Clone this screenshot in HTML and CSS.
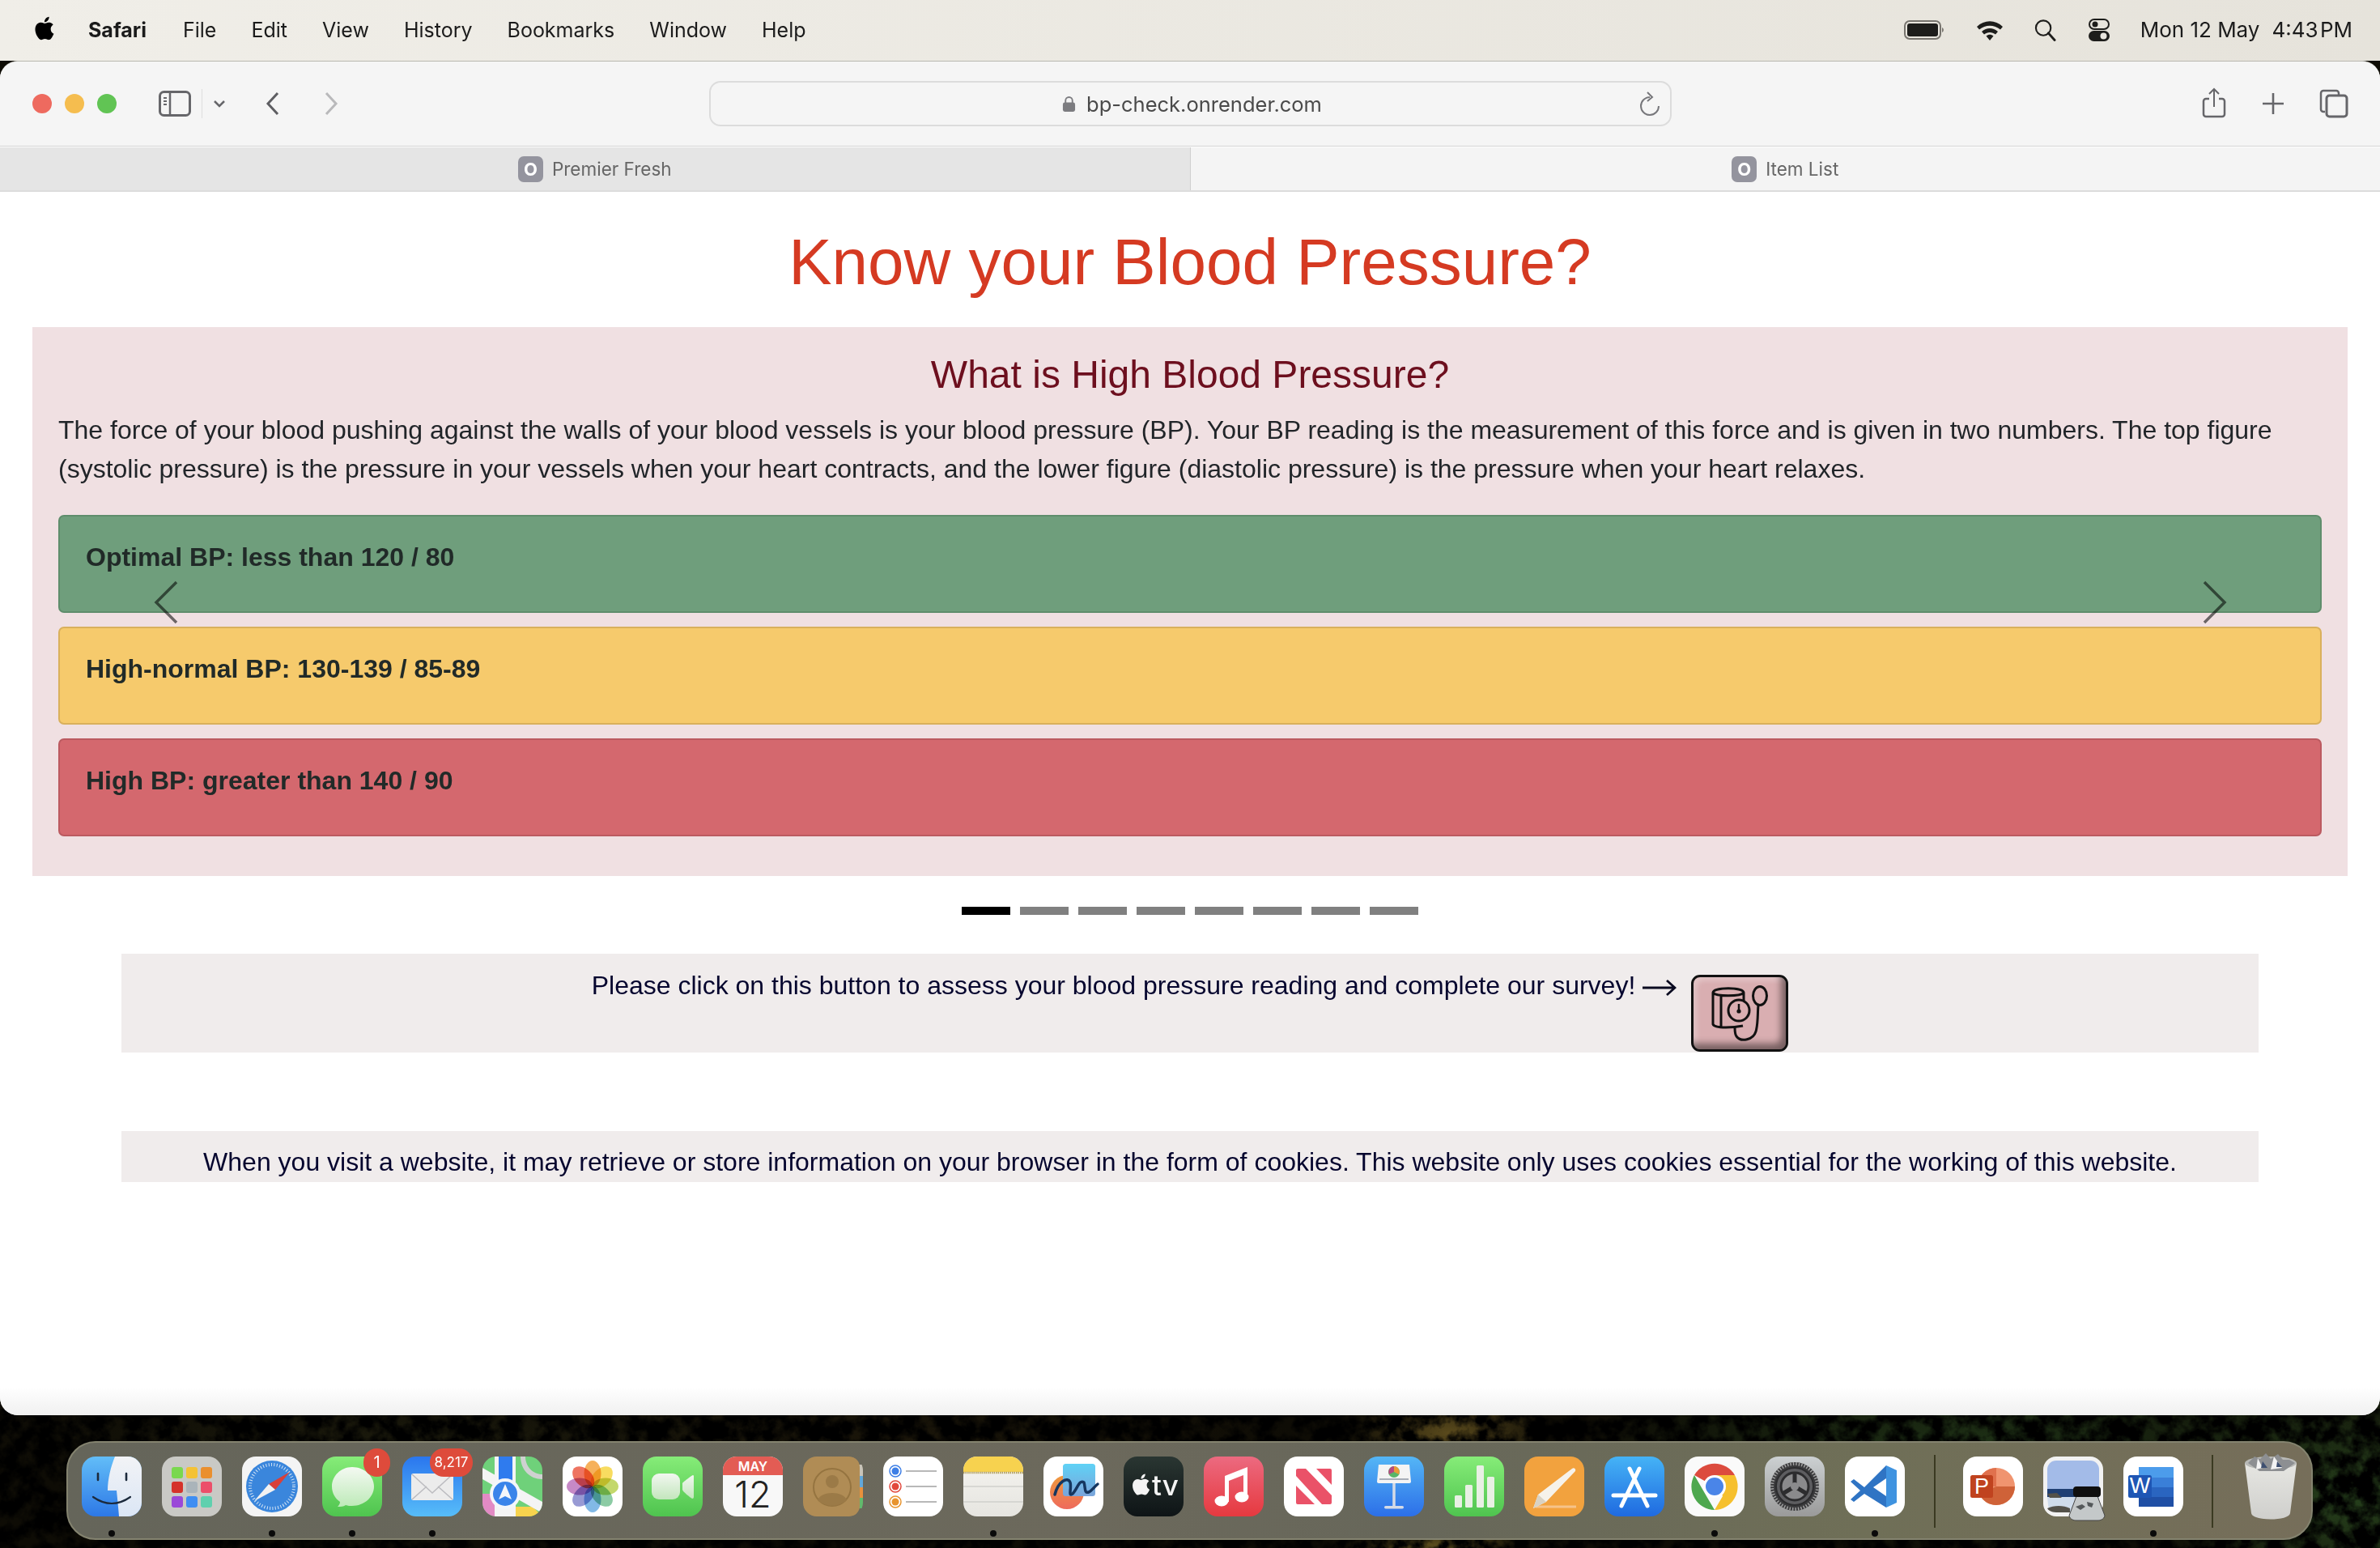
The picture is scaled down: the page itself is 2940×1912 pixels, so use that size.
FILE: index.html
```html
<!DOCTYPE html>
<html lang="en">

<head>
    <meta charset="UTF-8">
    <title>Know your Blood Pressure?</title>
    <link rel="stylesheet" href="styles.css">
</head>

<body>
    <!-- Desktop picture, only the strip under the window shows -->
    <svg class="wallpaper" width="2940" height="1912">
        <filter id="leaves" x="0" y="0" width="100%" height="100%">
            <feTurbulence type="fractalNoise" baseFrequency="0.045" numOctaves="4" seed="7"/>
            <feColorMatrix values="0 0 0 0 0  0 0 0 0 0  0 0 0 0 0  3.4 0 0 0 -1"/>
        </filter>
        <rect y="1740" width="2940" height="172" filter="url(#leaves)"/>
    </svg>

    <!-- Menu bar -->
    <header class="menubar">
        <svg class="apple" viewBox="0 0 24 24"><path d="M18.71 19.5c-.83 1.24-1.71 2.45-3.05 2.47-1.34.03-1.77-.79-3.29-.79-1.53 0-2 .77-3.27.82-1.31.05-2.3-1.32-3.14-2.53C4.25 17 2.94 12.45 4.7 9.39c.87-1.52 2.43-2.48 4.12-2.51 1.28-.02 2.5.87 3.29.87.78 0 2.26-1.07 3.81-.91.65.03 2.47.26 3.64 1.98-.09.06-2.17 1.28-2.15 3.81.03 3.02 2.65 4.03 2.68 4.04-.03.07-.42 1.44-1.38 2.83M13 3.5c.73-.83 1.94-1.46 2.94-1.5.13 1.17-.34 2.35-1.04 3.19-.69.85-1.83 1.51-2.95 1.42-.15-1.15.41-2.35 1.05-3.11z"/></svg>
        <nav class="menu">
            <b>Safari</b>
            <span>File</span>
            <span>Edit</span>
            <span>View</span>
            <span>History</span>
            <span>Bookmarks</span>
            <span>Window</span>
            <span>Help</span>
        </nav>
        <div class="status">
            <svg class="st-battery" viewBox="0 0 50 24"><rect x="1" y="1" width="44" height="22" rx="6" fill="none" stroke="#77746e" stroke-width="2"/><rect x="4" y="4" width="38" height="16" rx="3" fill="#1d1d1b"/><path d="M47 9c2.500 1 2.500 5 0 6z" fill="#77746e"/></svg>
            <svg class="st-wifi" viewBox="0 0 34 26"><path d="M1 9C10 0 24 0 33 9l-3 3.500C22.500 6 11.500 6 4 12.500z" fill="#1d1d1b"/><path d="M7 15c6-5.500 14-5.500 20 0l-3 3.500c-4-3.500-10-3.500-14 0z" fill="#1d1d1b"/><path d="M12.500 20.500c3-2.500 6-2.500 9 0L17 26z" fill="#1d1d1b"/></svg>
            <svg class="st-search" viewBox="0 0 28 28"><circle cx="11.500" cy="11.500" r="9.500" fill="none" stroke="#1d1d1b" stroke-width="2.200"/><path d="M18 18l8 9" stroke="#1d1d1b" stroke-width="3" stroke-linecap="round"/></svg>
            <svg class="st-control" viewBox="0 0 26 28"><rect x="1" y="1" width="24" height="12" rx="6" fill="none" stroke="#1d1d1b" stroke-width="2"/><circle cx="8" cy="7" r="3.500" fill="#1d1d1b"/><rect x="0" y="15" width="26" height="13" rx="6.500" fill="#1d1d1b"/><circle cx="18.500" cy="21.500" r="4" fill="#e8e5de"/></svg>
            <span class="clock">Mon 12 May</span>
            <span class="clock clock-time">4:43 PM</span>
        </div>
    </header>

    <!-- Browser window -->
    <div class="window">
        <div class="toolbar">
            <div class="tb-left">
                <i class="light light-red"></i>
                <i class="light light-yellow"></i>
                <i class="light light-green"></i>
                <svg class="tb-sidebar" viewBox="0 0 40 32"><rect x="1.500" y="1.500" width="37" height="29" rx="5" fill="none" stroke="#66666a" stroke-width="3"/><path d="M14 2v28" stroke="#66666a" stroke-width="2.500"/><path d="M6 9h4M6 13h4M6 17h4" stroke="#66666a" stroke-width="2"/></svg>
                <i class="tb-sep"></i>
                <svg class="tb-chevron" viewBox="0 0 18 12"><path d="M3 3l6 6 6-6" fill="none" stroke="#66666a" stroke-width="2.500"/></svg>
                <svg class="tb-back" viewBox="0 0 18 30"><path d="M15 2L3 15l12 13" fill="none" stroke="#5e5e62" stroke-width="3"/></svg>
                <svg class="tb-forward" viewBox="0 0 18 30"><path d="M3 2l12 13L3 28" fill="none" stroke="#b9b9bb" stroke-width="3"/></svg>
            </div>
            <div class="urlbar">
                <svg class="lock" viewBox="0 0 18 22"><path d="M4.500 10V6.500a4.500 4.500 0 0 1 9 0V10" fill="none" stroke="#7c7c80" stroke-width="2"/><rect x="1" y="9" width="16" height="12" rx="2.500" fill="#7c7c80"/></svg>
                <span class="url">bp-check.onrender.com</span>
                <svg class="reload" viewBox="0 0 26 30"><path d="M24 18A11 11 0 1 1 13 7" fill="none" stroke="#77777b" stroke-width="2"/><path d="M10 1l6 6-6 5" fill="none" stroke="#77777b" stroke-width="2"/></svg>
            </div>
            <div class="tb-right">
                <svg class="tb-share" viewBox="0 0 30 38"><path d="M9 14H5a3 3 0 0 0-3 3v16a3 3 0 0 0 3 3h20a3 3 0 0 0 3-3V17a3 3 0 0 0-3-3h-4" fill="none" stroke="#66666a" stroke-width="2.500"/><path d="M15 24V2M9 8l6-6 6 6" fill="none" stroke="#66666a" stroke-width="2"/></svg>
                <svg class="tb-plus" viewBox="0 0 28 28"><path d="M14 1v26M1 14h26" stroke="#66666a" stroke-width="2.600"/></svg>
                <svg class="tb-tabs" viewBox="0 0 36 36"><path d="M7 28H5a3 3 0 0 1-3-3V5a3 3 0 0 1 3-3h16a3 3 0 0 1 3 3v2" fill="none" stroke="#66666a" stroke-width="2.500"/><rect x="9" y="8" width="25" height="26" rx="3.500" fill="none" stroke="#66666a" stroke-width="3"/></svg>
            </div>
        </div>
        <div class="tabs">
            <div class="tab tab-off"><i class="favicon">O</i><span>Premier Fresh</span></div>
            <div class="tab tab-on"><i class="favicon">O</i><span>Item List</span></div>
        </div>

        <!-- Page content -->
        <main class="page">
            <h1>Know your Blood Pressure?</h1>

            <section class="slide">
                <h2>What is High Blood Pressure?</h2>
                <p>The force of your blood pushing against the walls of your blood vessels is your blood pressure (BP). Your BP reading is the measurement of this force and is given in two numbers. The top figure (systolic pressure) is the pressure in your vessels when your heart contracts, and the lower figure (diastolic pressure) is the pressure when your heart relaxes.</p>
                <div class="alert alert-green">Optimal BP: less than 120 / 80</div>
                <div class="alert alert-yellow">High-normal BP: 130-139 / 85-89</div>
                <div class="alert alert-red">High BP: greater than 140 / 90</div>
                <svg class="arrow arrow-prev" viewBox="0 0 30 54"><path d="M28 2L3 27l25 25" fill="none" stroke="#000" stroke-width="3.500"/></svg>
                <svg class="arrow arrow-next" viewBox="0 0 30 54"><path d="M2 2l25 25L2 52" fill="none" stroke="#000" stroke-width="3.500"/></svg>
            </section>

            <div class="dots">
                <i class="dot dot-on"></i><i class="dot"></i><i class="dot"></i><i class="dot"></i><i class="dot"></i><i class="dot"></i><i class="dot"></i><i class="dot"></i>
            </div>

            <div class="notice notice-survey">
                <span>Please click on this button to assess your blood pressure reading and complete our survey!</span>
                <svg class="notice-arrow" viewBox="0 0 42 22"><path d="M0 11h40M30 2l10 9-10 9" fill="none" stroke="#0a0a20" stroke-width="2.800"/></svg>
                <button class="bp-button">
                    <svg viewBox="0 0 70 70"><path d="M18 52c-7 0-15-1-16-4V9c1-7 37-7 38 0v13M2 9c4 5 34 5 38 0M12 11v40M18 52c6 0 16-1 21-2" fill="none" stroke="#111" stroke-width="3"/><circle cx="34" cy="31" r="13" fill="#d9aeb1" stroke="#111" stroke-width="3"/><path d="M34 23v9" stroke="#111" stroke-width="2.500"/><circle cx="34" cy="32" r="2.600" fill="#111"/><ellipse cx="60" cy="13" rx="8.500" ry="11.500" fill="none" stroke="#111" stroke-width="3"/><path d="M58 25c-1 8 0 22-3 32-3 10-18 14-24 6-2-3-2-6-2-11" fill="none" stroke="#111" stroke-width="3"/></svg>
                </button>
            </div>

            <div class="notice notice-cookies">When you visit a website, it may retrieve or store information on your browser in the form of cookies. This website only uses cookies essential for the working of this website.</div>
        </main>
    </div>

    <!-- Dock -->
    <footer class="dock">
        <!-- Finder -->
        <div class="app run"><svg viewBox="0 0 74 74"><defs><linearGradient id="gfb" x2="0" y2="1"><stop offset="0" stop-color="#62bdf8"/><stop offset="1" stop-color="#2d78e6"/></linearGradient><linearGradient id="gfw" x2="0" y2="1"><stop offset="0" stop-color="#f2f3f6"/><stop offset="1" stop-color="#dbe6f5"/></linearGradient></defs><rect width="74" height="74" fill="url(#gfb)"/><path d="M41 0h33v74H46c-1-12-2-22-3-32H32c0-14 4-30 9-42z" fill="url(#gfw)"/><path d="M20 21v8M55 21v8" stroke="#1c2a3c" stroke-width="2.600" stroke-linecap="round"/><path d="M14 50q23 16 46 0" fill="none" stroke="#1c2a3c" stroke-width="2.200" stroke-linecap="round"/></svg></div>
        <!-- Launchpad -->
        <div class="app"><svg viewBox="0 0 74 74"><rect width="74" height="74" fill="#c9c9c5"/><rect x="12" y="13" width="14" height="14" rx="3" fill="#7ad84f"/><rect x="30" y="13" width="14" height="14" rx="3" fill="#f4c235"/><rect x="48" y="13" width="14" height="14" rx="3" fill="#ea8f2e"/><rect x="12" y="31" width="14" height="14" rx="3" fill="#d5322a"/><rect x="30" y="31" width="14" height="14" rx="3" fill="#aab4ba"/><rect x="48" y="31" width="14" height="14" rx="3" fill="#ec4f6a"/><rect x="12" y="49" width="14" height="14" rx="3" fill="#9a49d8"/><rect x="30" y="49" width="14" height="14" rx="3" fill="#3f8ef2"/><rect x="48" y="49" width="14" height="14" rx="3" fill="#5fd0ae"/></svg></div>
        <!-- Safari -->
        <div class="app run"><svg viewBox="0 0 74 74"><rect width="74" height="74" fill="#f4f4f4"/><circle cx="37" cy="37" r="32" fill="#3a86dc"/><circle cx="37" cy="37" r="27" fill="none" stroke="#d6e6f6" stroke-width="4" stroke-dasharray="1 2.400"/><path d="M59 19L33 34l8 7z" fill="#d9403a"/><path d="M15 55l26-14-8-7z" fill="#f2f2f2"/></svg></div>
        <!-- Messages -->
        <div class="app run"><svg viewBox="0 0 74 74"><defs><linearGradient id="gm" x2="0" y2="1"><stop offset="0" stop-color="#86ec78"/><stop offset="1" stop-color="#4fc44f"/></linearGradient><linearGradient id="gmb" x2="0" y2="1"><stop offset="0" stop-color="#f4f9f2"/><stop offset="1" stop-color="#bdeab8"/></linearGradient></defs><rect width="74" height="74" fill="url(#gm)"/><path d="M37 13c15 0 27 11 27 24S52 61 37 61c-3 0-5 0-8-1-3 2-6 2-10 2 2-2 3-4 3-6-6-4-10-11-10-19 0-13 11-24 25-24z" fill="url(#gmb)"/></svg><span class="badge badge-one">1</span></div>
        <!-- Mail -->
        <div class="app run"><svg viewBox="0 0 74 74"><defs><linearGradient id="gmail" x2="0" y2="1"><stop offset="0" stop-color="#2a76ee"/><stop offset="1" stop-color="#57bdf9"/></linearGradient></defs><rect width="74" height="74" fill="url(#gmail)"/><rect x="11" y="21" width="52" height="33" rx="2.500" fill="#ececec"/><path d="M12 22l25 23 25-23M12 53l18-16M62 53L44 37" fill="none" stroke="#bcbcc0" stroke-width="1.600"/></svg><span class="badge badge-mail">8,217</span></div>
        <!-- Maps -->
        <div class="app"><svg viewBox="0 0 74 74"><rect width="74" height="74" fill="#6fd17a"/><path d="M0 46h17v28H0z" fill="#e28ac4"/><path d="M40 62h22l12 12H40z" fill="#f7d34e"/><path d="M0 14l74 42v14L0 28z" fill="#f4f4f4"/><path d="M15 0h26v74H15z" fill="#f4f4f4"/><path d="M20 0h17v34H20z" fill="#2f7bee"/><path d="M47 0c0 16 11 28 27 28v-6C62 22 53 12 53 0z" fill="#cfd1d1"/><circle cx="28" cy="46" r="19" fill="#f4f6fa"/><circle cx="28" cy="46" r="15" fill="#3a84ea"/><path d="M28 34l8 19-8-4-8 4z" fill="#f4f6fa"/></svg></div>
        <!-- Photos -->
        <div class="app"><svg viewBox="0 0 74 74"><rect width="74" height="74" fill="#fff"/><g class="petals"><ellipse cx="37" cy="21" rx="10.500" ry="16" fill="#f5a94a"/><ellipse cx="37" cy="21" rx="10.500" ry="16" fill="#f8d84e" transform="rotate(45 37 37)"/><ellipse cx="37" cy="21" rx="10.500" ry="16" fill="#bdd45c" transform="rotate(90 37 37)"/><ellipse cx="37" cy="21" rx="10.500" ry="16" fill="#7fc69a" transform="rotate(135 37 37)"/><ellipse cx="37" cy="21" rx="10.500" ry="16" fill="#74b2e4" transform="rotate(180 37 37)"/><ellipse cx="37" cy="21" rx="10.500" ry="16" fill="#8d8fd0" transform="rotate(225 37 37)"/><ellipse cx="37" cy="21" rx="10.500" ry="16" fill="#c07cc0" transform="rotate(270 37 37)"/><ellipse cx="37" cy="21" rx="10.500" ry="16" fill="#ec6550" transform="rotate(315 37 37)"/></g></svg></div>
        <!-- FaceTime -->
        <div class="app"><svg viewBox="0 0 74 74"><defs><linearGradient id="gf" x2="0" y2="1"><stop offset="0" stop-color="#86ec78"/><stop offset="1" stop-color="#4fc44f"/></linearGradient><linearGradient id="gfc" x2="0" y2="1"><stop offset="0" stop-color="#f2f7f0"/><stop offset="1" stop-color="#c3e6bd"/></linearGradient></defs><rect width="74" height="74" fill="url(#gf)"/><rect x="11" y="21" width="35" height="32" rx="9" fill="url(#gfc)"/><path d="M49 33c0-1 12-10 13-10 1 0 1 1 1 2v24c0 1 0 3-2 3-2-1-12-9-12-11z" fill="url(#gfc)"/></svg></div>
        <!-- Calendar -->
        <div class="app"><svg viewBox="0 0 74 74"><rect width="74" height="74" fill="#f8f8f8"/><rect width="74" height="23" fill="#e35c54"/><text x="37" y="18" class="cal-month">MAY</text><text x="37" y="63" class="cal-day">12</text></svg></div>
        <!-- Contacts -->
        <div class="app"><svg viewBox="0 0 74 74"><rect x="68" y="10" width="6" height="14" fill="#c9c4b8"/><rect x="68" y="24" width="6" height="14" fill="#62a8da"/><rect x="68" y="38" width="6" height="13" fill="#e8913c"/><rect x="68" y="51" width="6" height="13" fill="#62b96c"/><rect width="70" height="74" rx="13" fill="#b08c55"/><circle cx="36" cy="38" r="23" fill="none" stroke="#957440" stroke-width="2"/><circle cx="36" cy="31" r="8" fill="#9b7a47"/><path d="M18 54c4-12 32-12 36 0-10 9-26 9-36 0z" fill="#9b7a47"/></svg></div>
        <!-- Reminders -->
        <div class="app"><svg viewBox="0 0 74 74"><rect width="74" height="74" fill="#fff"/><circle cx="15" cy="18" r="7" fill="none" stroke="#3d7fe6" stroke-width="1.500"/><circle cx="15" cy="18" r="4.500" fill="#3d7fe6"/><circle cx="15" cy="37" r="7" fill="none" stroke="#e2483c" stroke-width="1.500"/><circle cx="15" cy="37" r="4.500" fill="#e2483c"/><circle cx="15" cy="56" r="7" fill="none" stroke="#e8942e" stroke-width="1.500"/><circle cx="15" cy="56" r="4.500" fill="#e8942e"/><path d="M28 18h38M28 37h38M28 56h38" stroke="#b8b8b8" stroke-width="1.800"/></svg></div>
        <!-- Notes -->
        <div class="app run"><svg viewBox="0 0 74 74"><defs><linearGradient id="gn" x2="0" y2="1"><stop offset="0" stop-color="#f5f4f0"/><stop offset="1" stop-color="#e6e5e0"/></linearGradient></defs><rect width="74" height="74" fill="url(#gn)"/><rect width="74" height="19" fill="#f7d24f"/><path d="M0 20h74" stroke="#b3a15f" stroke-width="2.500" stroke-dasharray="1.500 1"/><path d="M0 37h74M0 56h74" stroke="#cfcfcb" stroke-width="1.500"/></svg></div>
        <!-- Freeform -->
        <div class="app"><svg viewBox="0 0 74 74"><defs><linearGradient id="gff" x2="0" y2="1"><stop offset="0" stop-color="#ef9a3e"/><stop offset="1" stop-color="#ee6a5c"/></linearGradient><linearGradient id="gfs" x2="0" y2="1"><stop offset="0" stop-color="#5fd2f6"/><stop offset="1" stop-color="#7ba4da"/></linearGradient></defs><rect width="74" height="74" fill="#fff"/><circle cx="29" cy="44" r="21" fill="url(#gff)"/><rect x="24" y="9" width="40" height="40" rx="3.500" fill="url(#gfs)"/><path d="M14 47C18 31 30 24 33 32c2 8-3 18 3 14 6-6 8-18 14-14 2 6 0 14 6 12 4-2 6-6 11-10" fill="none" stroke="#16365f" stroke-width="3.500" stroke-linecap="round"/></svg></div>
        <!-- TV -->
        <div class="app"><svg viewBox="0 0 74 74"><defs><linearGradient id="gtv" x2="0" y2="1"><stop offset="0" stop-color="#2a3632"/><stop offset="1" stop-color="#0e1416"/></linearGradient></defs><rect width="74" height="74" fill="url(#gtv)"/><path transform="translate(6 19) scale(1.300)" fill="#f4f4f4" d="M18.710 19.500c-.83 1.240-1.710 2.450-3.050 2.470-1.340.03-1.770-.79-3.290-.79-1.530 0-2 .77-3.270.82-1.310.05-2.300-1.320-3.140-2.530C4.250 17 2.940 12.450 4.700 9.390c.87-1.520 2.430-2.480 4.120-2.510 1.280-.02 2.500.87 3.290.87.78 0 2.260-1.070 3.810-.91.65.03 2.470.26 3.640 1.980-.09.06-2.170 1.280-2.150 3.810.03 3.020 2.650 4.030 2.680 4.040-.03.07-.42 1.440-1.380 2.830M13 3.500c.73-.83 1.940-1.460 2.940-1.500.13 1.170-.34 2.350-1.040 3.190-.69.85-1.830 1.510-2.950 1.420-.15-1.150.41-2.350 1.050-3.110z"/><text x="35" y="48" class="tv-text">tv</text></svg></div>
        <!-- Music -->
        <div class="app"><svg viewBox="0 0 74 74"><defs><linearGradient id="gmu" x2="0" y2="1"><stop offset="0" stop-color="#ec6a80"/><stop offset="1" stop-color="#e6393f"/></linearGradient></defs><rect width="74" height="74" fill="url(#gmu)"/><path d="M26 24l28-11v37h-5V23l-18 7v26h-5z" fill="#fff"/><ellipse cx="22" cy="55" rx="8.500" ry="6.500" fill="#fff"/><ellipse cx="47" cy="50" rx="8.500" ry="6.500" fill="#fff"/></svg></div>
        <!-- News -->
        <div class="app"><svg viewBox="0 0 74 74"><rect width="74" height="74" fill="#fff"/><path d="M15 17a2 2 0 0 1 2-2h10l32 33v9a2 2 0 0 1-2 2H47L15 24zM40 15h17a2 2 0 0 1 2 2v18zM15 36l23 23H17a2 2 0 0 1-2-2z" fill="#ea5268"/></svg></div>
        <!-- Keynote -->
        <div class="app"><svg viewBox="0 0 74 74"><defs><linearGradient id="gk" x2="0" y2="1"><stop offset="0" stop-color="#54b6f6"/><stop offset="1" stop-color="#2c6fe8"/></linearGradient></defs><rect width="74" height="74" fill="url(#gk)"/><path d="M18 10h38l2 21c0 1-1 2-2 2H18c-1 0-2-1-2-2z" fill="#f4f4f4"/><path d="M19 28h36" stroke="#a8aeb8" stroke-width="1.800"/><circle cx="37" cy="19" r="7" fill="#58b668"/><path d="M37 19v-7a7 7 0 0 1 6 10z" fill="#ec9a37"/><path d="M37 19l-6 3a7 7 0 0 1 6-10z" fill="#b84a80"/><path d="M37 33v29" stroke="#d5dbe6" stroke-width="3.500"/><rect x="25" y="61" width="24" height="3.500" rx="1.700" fill="#d5dbe6"/></svg></div>
        <!-- Numbers -->
        <div class="app"><svg viewBox="0 0 74 74"><defs><linearGradient id="gnu" x2="0" y2="1"><stop offset="0" stop-color="#86ec78"/><stop offset="1" stop-color="#4fc44f"/></linearGradient></defs><rect width="74" height="74" fill="url(#gnu)"/><rect x="13" y="48" width="9" height="15" rx="1.500" fill="#e8f0e4"/><rect x="26" y="35" width="9" height="28" rx="1.500" fill="#e8f0e4"/><rect x="40" y="11" width="9" height="52" rx="1.500" fill="#e8f0e4"/><rect x="53" y="25" width="9" height="38" rx="1.500" fill="#e8f0e4"/></svg></div>
        <!-- Pages -->
        <div class="app"><svg viewBox="0 0 74 74"><rect width="74" height="74" fill="#f2a23e"/><path d="M14 62h50" stroke="#f6c38a" stroke-width="3"/><path d="M59 15c2-2 5 0 4 3L27 56 11 64l6-17z" fill="#f6f2ea"/><path d="M11 64l6-17 10 9z" fill="#d9d2c3"/></svg></div>
        <!-- App Store -->
        <div class="app"><svg viewBox="0 0 74 74"><defs><linearGradient id="ga" x2="0" y2="1"><stop offset="0" stop-color="#45b3f6"/><stop offset="1" stop-color="#1f6ae0"/></linearGradient></defs><rect width="74" height="74" fill="url(#ga)"/><path d="M21 61l22-46M53 61L31 15M11 48h52" fill="none" stroke="#fff" stroke-width="5" stroke-linecap="round"/></svg></div>
        <!-- Chrome -->
        <div class="app run"><svg viewBox="0 0 74 74"><rect width="74" height="74" fill="#fafafa"/><path d="M37 37L12 23a29 29 0 0 1 50 0z" fill="#dc4b3e"/><path d="M37 66a29 29 0 0 1-25-43l15 26z" fill="#4ea84f"/><path d="M37 66a29 29 0 0 0 25-43H37l10 26z" fill="#f6c02e"/><circle cx="37" cy="37" r="14" fill="#fff"/><circle cx="37" cy="37" r="11" fill="#4a85e8"/></svg></div>
        <!-- System Settings -->
        <div class="app"><svg viewBox="0 0 74 74"><defs><linearGradient id="gs" x2="0" y2="1"><stop offset="0" stop-color="#ccd0d2"/><stop offset="1" stop-color="#9a9a9a"/></linearGradient></defs><rect width="74" height="74" fill="url(#gs)"/><circle cx="37" cy="37" r="30" fill="#3a3a3c"/><circle cx="37" cy="37" r="28" fill="none" stroke="#a0a0a0" stroke-width="4" stroke-dasharray="1.500 2"/><circle cx="37" cy="37" r="23" fill="#5d5d60" stroke="#2c2c2e" stroke-width="2"/><circle cx="37" cy="37" r="17" fill="#8a8a8c" stroke="#2c2c2e" stroke-width="3"/><path d="M37 37V20M37 37L22 46M37 37l15 9" stroke="#2c2c2e" stroke-width="5"/><circle cx="37" cy="37" r="5" fill="#8a8a8c"/></svg></div>
        <!-- VS Code -->
        <div class="app run"><svg viewBox="0 0 74 74"><rect width="74" height="74" fill="#fff"/><path d="M51 11l13 6v40l-13 6z" fill="#3f93e0"/><path d="M51 11L24 38 11 28l-4 3 12 11-12 11 4 3 13-10 27 17z" fill="#2f74c4"/><path d="M51 27L35 38l16 11z" fill="#fff"/></svg></div>
        <i class="dock-sep"></i>
        <!-- PowerPoint -->
        <div class="app"><svg viewBox="0 0 74 74"><rect width="74" height="74" fill="#fff"/><circle cx="41" cy="37" r="23" fill="#f0946f"/><path d="M41 37h23a23 23 0 0 1-23 23 23 23 0 0 1-21-14z" fill="#cf6238"/><path d="M41 37H18a23 23 0 0 1 23-23z" fill="#e0714d"/><rect x="9" y="23" width="28" height="28" rx="2.500" fill="#c0431f"/><text x="23" y="46" class="office-letter">P</text></svg></div>
        <!-- Preview -->
        <div class="app app-free"><svg viewBox="0 0 78 80"><rect width="74" height="74" rx="16" fill="#f2f2f2"/><path d="M5 16a11 11 0 0 1 11-11h42a11 11 0 0 1 11 11v24H5z" fill="#a3bbe8"/><rect x="5" y="40" width="64" height="10" fill="#1f3f73"/><path d="M5 50h64v9c0 6-4 10-10 10H16c-6 0-10-4-10-10z" fill="#cfdceb"/><path d="M5 46l12-1 6 6H8zM5 64c8-4 20-4 28 0v5H16c-6 0-10-3-11-5z" fill="#54524a"/><path d="M41 49h26l9 24c-1 5-6 6-9 6H41c-3 0-8-1-9-6z" fill="#c4c8c9" stroke="#444" stroke-width="1"/><path d="M40 62l8-3 4 3-6 4zM54 56l8 2-2 5-5-2z" fill="#54585a"/><rect x="37" y="37" width="34" height="13" rx="4" fill="#0f0f0f"/></svg></div>
        <!-- Word -->
        <div class="app run"><svg viewBox="0 0 74 74"><rect width="74" height="74" fill="#fff"/><rect x="19" y="13" width="43" height="13" fill="#4c9ceb"/><rect x="19" y="26" width="43" height="12" fill="#3a7fd8"/><rect x="19" y="38" width="43" height="12" fill="#2a65c0"/><rect x="19" y="50" width="43" height="12" fill="#1f4fa5"/><rect x="6" y="23" width="29" height="28" rx="2.500" fill="#1e56b4"/><text x="20.500" y="45" class="office-letter">W</text></svg></div>
        <i class="dock-sep dock-sep-last"></i>
        <!-- Trash -->
        <div class="app app-free app-trash"><svg viewBox="0 0 68 84"><defs><linearGradient id="gt" x2="0" y2="1"><stop offset="0" stop-color="#e6e6e2"/><stop offset="1" stop-color="#cfcfcc"/></linearGradient></defs><path d="M2 14l8 62c1 10 47 10 48 0l8-62z" fill="url(#gt)"/><ellipse cx="34" cy="14" rx="32" ry="8" fill="#b8b9b6"/><path d="M6 14l8-8 7 3 7-7 6 7 9-6 6 7 8 0 7 4-14 10H20z" fill="#8d8f92"/><path d="M18 8l6 12-8 2zM38 6l10 14-14 2z" fill="#f3f3f3"/><path d="M24 12l6 8h-8zM42 12l6 7h-7z" fill="#3e4f70"/></svg></div>
    </footer>
</body>

</html>
```

FILE: styles.css
```css
* {
    box-sizing: border-box;
}

html,
body {
    margin: 0;
    width: 2940px;
    height: 1912px;
    overflow: hidden;
}

body {
    display: flex;
    flex-direction: column;
    font-family: "Liberation Sans", Arial, sans-serif;
    background:
        radial-gradient(ellipse 130px 60px at 1790px 1770px, #5a4a1c, transparent),
        radial-gradient(ellipse 130px 30px at 1770px 1908px, #5a4c1c, transparent),
        radial-gradient(ellipse 500px 130px at 2450px 1790px, #1e3216, transparent),
        radial-gradient(ellipse 260px 160px at 2900px 1850px, #26401c, transparent),
        radial-gradient(ellipse 500px 70px at 500px 1780px, #1b1a0c, transparent),
        radial-gradient(ellipse 500px 70px at 1100px 1775px, #1a1509, transparent),
        #0e0c05;
}

.wallpaper {
    position: absolute;
    left: 0;
    top: 0;
    z-index: -1;
}

/* Menu bar */
.menubar {
    height: 75px;
    flex: none;
    display: flex;
    align-items: center;
    padding: 0 34px 2px 38px;
    background: linear-gradient(90deg, #f0eee8, #e6e3db);
    font-family: Inter, "Noto Sans", sans-serif;
    font-size: 25px;
    color: #1b1b1b;
}

.apple {
    width: 34px;
    height: 34px;
    margin-top: -4px;
}

.menu {
    display: flex;
    gap: 43px;
    margin-left: 37px;
}

.menu b {
    font-weight: 700;
    margin-right: 2px;
}

.status {
    display: flex;
    align-items: center;
    margin-left: auto;
}

.st-battery {
    width: 50px;
    height: 24px;
}

.st-wifi {
    width: 34px;
    height: 26px;
    margin-left: 39px;
}

.st-search {
    width: 27px;
    height: 28px;
    margin-left: 38px;
}

.st-control {
    width: 26px;
    height: 28px;
    margin-left: 40px;
}

.clock {
    margin-left: 15px;
    font-size: 26px;
}

.clock-time {
    word-spacing: -5px;
}

.st-control + .clock {
    margin-left: 38px;
}

/* Browser window */
.window {
    height: 1673px;
    flex: none;
    display: flex;
    flex-direction: column;
    border-radius: 22px;
    overflow: hidden;
    border-top: 1px solid #b9b8b0;
    background: #fff;
}

.toolbar {
    height: 105px;
    flex: none;
    display: flex;
    align-items: center;
    background: #f5f5f5;
    border-bottom: 1px solid #d4d4d4;
    position: relative;
}

.tb-left {
    width: 876px;
    display: flex;
    align-items: center;
    padding-left: 40px;
}

.light {
    width: 24px;
    height: 24px;
    border-radius: 50%;
    margin-right: 16px;
}

.light-red {
    background: #ee6a5f;
}

.light-yellow {
    background: #f5bd4f;
}

.light-green {
    background: #61c454;
}

.tb-sidebar {
    width: 40px;
    height: 32px;
    margin-left: 36px;
}

.tb-sep {
    width: 1px;
    height: 36px;
    background: #dedede;
    margin-left: 13px;
}

.tb-chevron {
    width: 18px;
    height: 12px;
    margin-left: 12px;
}

.tb-back,
.tb-forward {
    width: 18px;
    height: 30px;
}

.tb-back {
    margin-left: 48px;
}

.tb-forward {
    margin-left: 54px;
}

.urlbar {
    width: 1189px;
    height: 56px;
    display: flex;
    align-items: center;
    justify-content: center;
    gap: 13px;
    padding-left: 4px;
    border: 2px solid #dcdcdc;
    border-radius: 14px;
    position: relative;
}

.lock {
    width: 17px;
    height: 21px;
}

.url {
    font-family: Inter, "Noto Sans", sans-serif;
    font-size: 25.500px;
    color: #4a4a4a;
}

.reload {
    position: absolute;
    right: 12px;
    top: 11px;
    width: 26px;
    height: 30px;
}

.tb-right {
    display: flex;
    align-items: center;
    padding-left: 655px;
}

.tb-share {
    width: 30px;
    height: 38px;
    margin-top: -3px;
}

.tb-plus {
    width: 28px;
    height: 28px;
    margin-left: 44px;
}

.tb-tabs {
    width: 36px;
    height: 36px;
    margin-left: 43px;
}

.tabs {
    height: 56px;
    flex: none;
    display: flex;
    padding-top: 1px;
    border-bottom: 2px solid #dcdcdc;
    font-family: Inter, "Noto Sans", sans-serif;
    font-size: 22.500px;
    color: #666;
}

.tab {
    flex: 1;
    display: flex;
    align-items: center;
    justify-content: center;
    gap: 11px;
}

.tab-off {
    background: #e5e5e5;
    border-right: 1px solid #cfcfcf;
}

.tab-on {
    background: #f4f4f4;
}

.favicon {
    width: 31px;
    height: 32px;
    border-radius: 7px;
    background: #94949e;
    color: #fff;
    display: flex;
    align-items: center;
    justify-content: center;
    font-style: normal;
    font-weight: 700;
    font-size: 22px;
}

/* Page content */
.page {
    flex: 1;
    background: linear-gradient(#fff calc(100% - 35px), #f0f0f0);
}

h1 {
    margin: 0;
    padding-top: 37px;
    height: 167px;
    line-height: 100px;
    text-align: center;
    font-size: 80px;
    font-weight: 400;
    color: #d53a22;
}

.slide {
    position: relative;
    margin: 0 40px;
    height: 678px;
    padding: 0 32px;
    background: #f0e0e2;
}

h2 {
    margin: 0;
    padding-top: 29px;
    line-height: 60px;
    text-align: center;
    font-size: 48px;
    font-weight: 400;
    color: #6d0f1e;
}

.slide p {
    margin: 14px 0 33px;
    font-size: 32px;
    line-height: 48px;
    color: #212529;
}

.alert {
    height: 121px;
    margin-bottom: 17px;
    padding: 28px 32px;
    border: 2px solid;
    border-radius: 7px;
    font-size: 32px;
    line-height: 44px;
    font-weight: 700;
    color: #212a28;
}

.alert-green {
    background: #6f9e7c;
    border-color: #5f8d6c;
}

.alert-yellow {
    background: #f6ca6c;
    border-color: #d9b05c;
}

.alert-red {
    background: #d4686e;
    border-color: #bb5a60;
}

.arrow {
    position: absolute;
    top: 313px;
    width: 30px;
    height: 54px;
    opacity: 0.55;
}

.arrow-prev {
    left: 150px;
}

.arrow-next {
    right: 149px;
}

.dots {
    display: flex;
    justify-content: center;
    gap: 12px;
    margin: 38px 0 48px;
}

.dot {
    width: 60px;
    height: 10px;
    background: #808080;
}

.dot-on {
    background: #000;
}

.notice {
    margin: 0 150px;
    background: #f0ecec;
    color: #05052e;
    font-size: 32px;
}

.notice-survey {
    height: 122px;
    display: flex;
    justify-content: center;
    align-items: flex-start;
    padding-top: 20px;
    line-height: 38px;
}

.notice-arrow {
    width: 42px;
    height: 22px;
    margin: 11px 0 0 9px;
}

.bp-button {
    width: 120px;
    height: 95px;
    margin: 6px 0 0 18px;
    padding: 0;
    display: flex;
    align-items: center;
    justify-content: center;
    background: #d9aeb1;
    border: 3px solid #111;
    border-radius: 11px;
    box-shadow: inset -6px -7px 8px rgba(0, 0, 0, 0.45), inset 4px 4px 6px rgba(255, 255, 255, 0.3);
}

.bp-button svg {
    width: 70px;
    height: 70px;
}

.notice-cookies {
    height: 63px;
    margin-top: 97px;
    padding-top: 19px;
    line-height: 38px;
    text-align: center;
}

/* Dock */
.dock {
    width: 2775px;
    height: 122px;
    margin: 32px 0 0 82px;
    flex: none;
    display: flex;
    align-items: flex-start;
    gap: 25px;
    padding: 17px 17px 0;
    border: 2px solid #84836f;
    border-radius: 36px;
    background: linear-gradient(90deg, #65655a, #6c695c 45%, #67675a 60%, #6f6f57 80%, #766e5a);
}

.app {
    width: 74px;
    height: 74px;
    position: relative;
    flex: none;
}

.app svg {
    display: block;
    width: 74px;
    height: 74px;
    border-radius: 17px;
}

.app-free svg {
    border-radius: 0;
    width: 78px;
    height: 80px;
    overflow: visible;
}

.petals {
    isolation: isolate;
}

.petals ellipse {
    mix-blend-mode: multiply;
    opacity: 0.9;
}

.run::after {
    content: "";
    position: absolute;
    left: 33px;
    top: 91px;
    width: 8px;
    height: 8px;
    border-radius: 50%;
    background: #0a0a0a;
}

.badge {
    position: absolute;
    top: -10px;
    height: 35px;
    border-radius: 17px;
    background: #de4b3b;
    color: #fff;
    font-family: Inter, "Noto Sans", sans-serif;
    line-height: 35px;
    text-align: center;
}

.badge-one {
    left: 51px;
    width: 33px;
    font-size: 20px;
}

.badge-mail {
    left: 34px;
    width: 53px;
    font-size: 17px;
}

.cal-month {
    font: 600 16px Inter, sans-serif;
    fill: #fff;
    text-anchor: middle;
}

.cal-day {
    font: 300 45px Inter, sans-serif;
    fill: #222;
    text-anchor: middle;
}

.tv-text {
    font: 500 35px Inter, sans-serif;
    fill: #f4f4f4;
}

.office-letter {
    font: 400 27px "Liberation Sans", sans-serif;
    fill: #fff;
    text-anchor: middle;
}

.dock-sep {
    width: 2px;
    height: 90px;
    margin-top: -2px;
    flex: none;
    background: #3b3a22;
    margin-left: 11px;
    margin-right: 9px;
}

.dock-sep-last {
    margin-left: 10px;
    margin-right: 12px;
}

.app-trash {
    margin-top: -6px;
    width: 68px;
}

.app-trash svg {
    width: 68px;
    height: 84px;
}
```
